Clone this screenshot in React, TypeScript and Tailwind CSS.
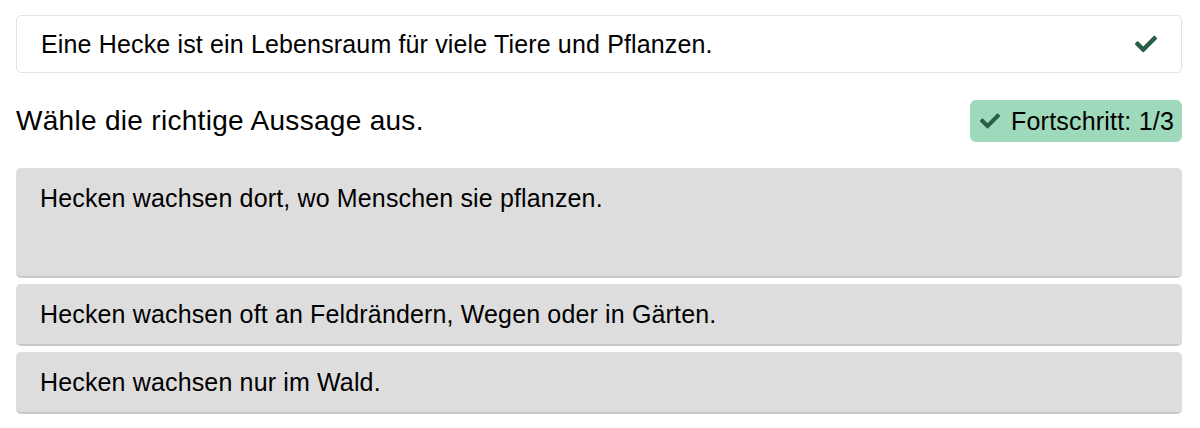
import React from 'react';
import { FaCheck } from 'react-icons/fa';

const options = [
  { text: 'Hecken wachsen dort, wo Menschen sie pflanzen.', tall: true },
  { text: 'Hecken wachsen oft an Feldrändern, Wegen oder in Gärten.', tall: false },
  { text: 'Hecken wachsen nur im Wald.', tall: false },
];

const App: React.FC = () => {
  return (
    <div className="bg-white min-h-screen pl-4 pr-[18px] pt-[15px] text-black" style={{ fontFamily: '"Liberation Sans", Arial, sans-serif' }}>
      {/* Already answered statement */}
      <div className="flex items-center justify-between h-[58px] border border-[#e3e3e3] rounded-[5px] pl-6 pr-6">
        <span className="text-[25px] tracking-[0.15px] leading-none">Eine Hecke ist ein Lebensraum für viele Tiere und Pflanzen.</span>
        <FaCheck className="text-[#2b5e48] w-[22px] h-[22px]" />
      </div>

      <div className="flex items-center justify-between mt-[27px]">
        <h2 className="text-[28px] tracking-[0.3px] leading-none">Wähle die richtige Aussage aus.</h2>
        <div className="flex items-center gap-[11px] h-[42px] pl-[10px] pr-[8px] rounded-[6px] bg-[#9fd9bb]">
          <FaCheck className="text-[#2b5e48] w-[20px] h-[20px]" />
          <span className="text-[25px] tracking-[0.2px] leading-none">Fortschritt: 1/3</span>
        </div>
      </div>

      <div className="flex flex-col gap-[6px] mt-[26px]">
        {options.map((o) => (
          <button
            key={o.text}
            className={`text-left bg-[#dddddd] rounded-[5px] border-b-2 border-[#c9c9c9] px-6 text-[25px] tracking-[0.15px] leading-[30px] ${
              o.tall ? 'h-[110px] pt-[15px] flex items-start' : 'h-[62px] flex items-center'
            }`}
          >
            {o.text}
          </button>
        ))}
      </div>
    </div>
  );
};

export default App;
